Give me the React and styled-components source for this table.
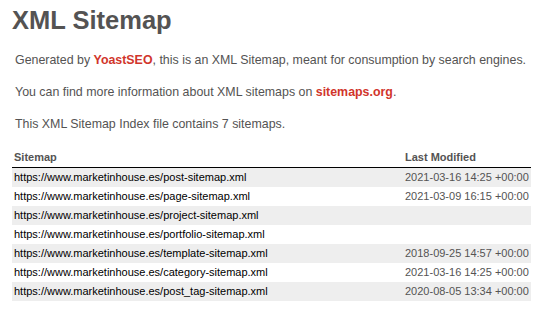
import React from "react";
import styled, { createGlobalStyle } from "styled-components";

const Global = createGlobalStyle`
  html, body { margin: 0; padding: 0; background: #fff; }
  body {
    font-family: "Liberation Sans", Arial, Helvetica, sans-serif;
    font-size: 12.4px;
    color: #545353;
  }
`;

const Content = styled.div`
  padding: 0 12px;
  width: 519px;
`;

const Title = styled.h1`
  margin: 0;
  padding-top: 5px;
  font-size: 25.5px;
  line-height: 30px;
  font-weight: 700;
  color: #545353;
`;

const Expl = styled.p`
  margin: ${(p) => (p.$first ? "18px" : "17px")} 3px 0;
  line-height: 15px;
  white-space: nowrap;
`;

const Strong = styled.a`
  color: #d1352b;
  font-weight: 700;
  text-decoration: none;
`;

const Table = styled.table`
  margin-top: 15px;
  width: 519px;
  border-collapse: collapse;
  border: none;
`;

const Th = styled.th`
  text-align: left;
  font-size: 11px;
  line-height: 13px;
  font-weight: 700;
  color: #545353;
  padding: 4px 2px 3px 2px;
  border-bottom: 1px solid #000;
`;

const Row = styled.tr`
  background: ${(p) => (p.$odd ? "#eee" : "#fff")};
`;

const Td = styled.td`
  font-size: 11px;
  line-height: 13px;
  height: 19px;
  padding: 0 2px;
  color: ${(p) => (p.$date ? "#545353" : "#000")};
  width: ${(p) => (p.$date ? "124px" : "auto")};
  white-space: nowrap;
`;

const rows = [
  ["post-sitemap.xml", "2021-03-16 14:25 +00:00"],
  ["page-sitemap.xml", "2021-03-09 16:15 +00:00"],
  ["project-sitemap.xml", ""],
  ["portfolio-sitemap.xml", ""],
  ["template-sitemap.xml", "2018-09-25 14:57 +00:00"],
  ["category-sitemap.xml", "2021-03-16 14:25 +00:00"],
  ["post_tag-sitemap.xml", "2020-08-05 13:34 +00:00"],
];

export default function App() {
  return (
    <>
      <Global />
      <Content>
        <Title>XML Sitemap</Title>
        <Expl $first>
          Generated by <Strong>YoastSEO</Strong>, this is an XML Sitemap, meant for consumption by search engines.
        </Expl>
        <Expl>
          You can find more information about XML sitemaps on <Strong>sitemaps.org</Strong>.
        </Expl>
        <Expl>This XML Sitemap Index file contains 7 sitemaps.</Expl>
        <Table>
          <thead>
            <tr>
              <Th>Sitemap</Th>
              <Th>Last Modified</Th>
            </tr>
          </thead>
          <tbody>
            {rows.map(([u, d], i) => (
              <Row key={u} $odd={i % 2 === 0}>
                <Td>https://www.marketinhouse.es/{u}</Td>
                <Td $date>{d}</Td>
              </Row>
            ))}
          </tbody>
        </Table>
      </Content>
    </>
  );
}
